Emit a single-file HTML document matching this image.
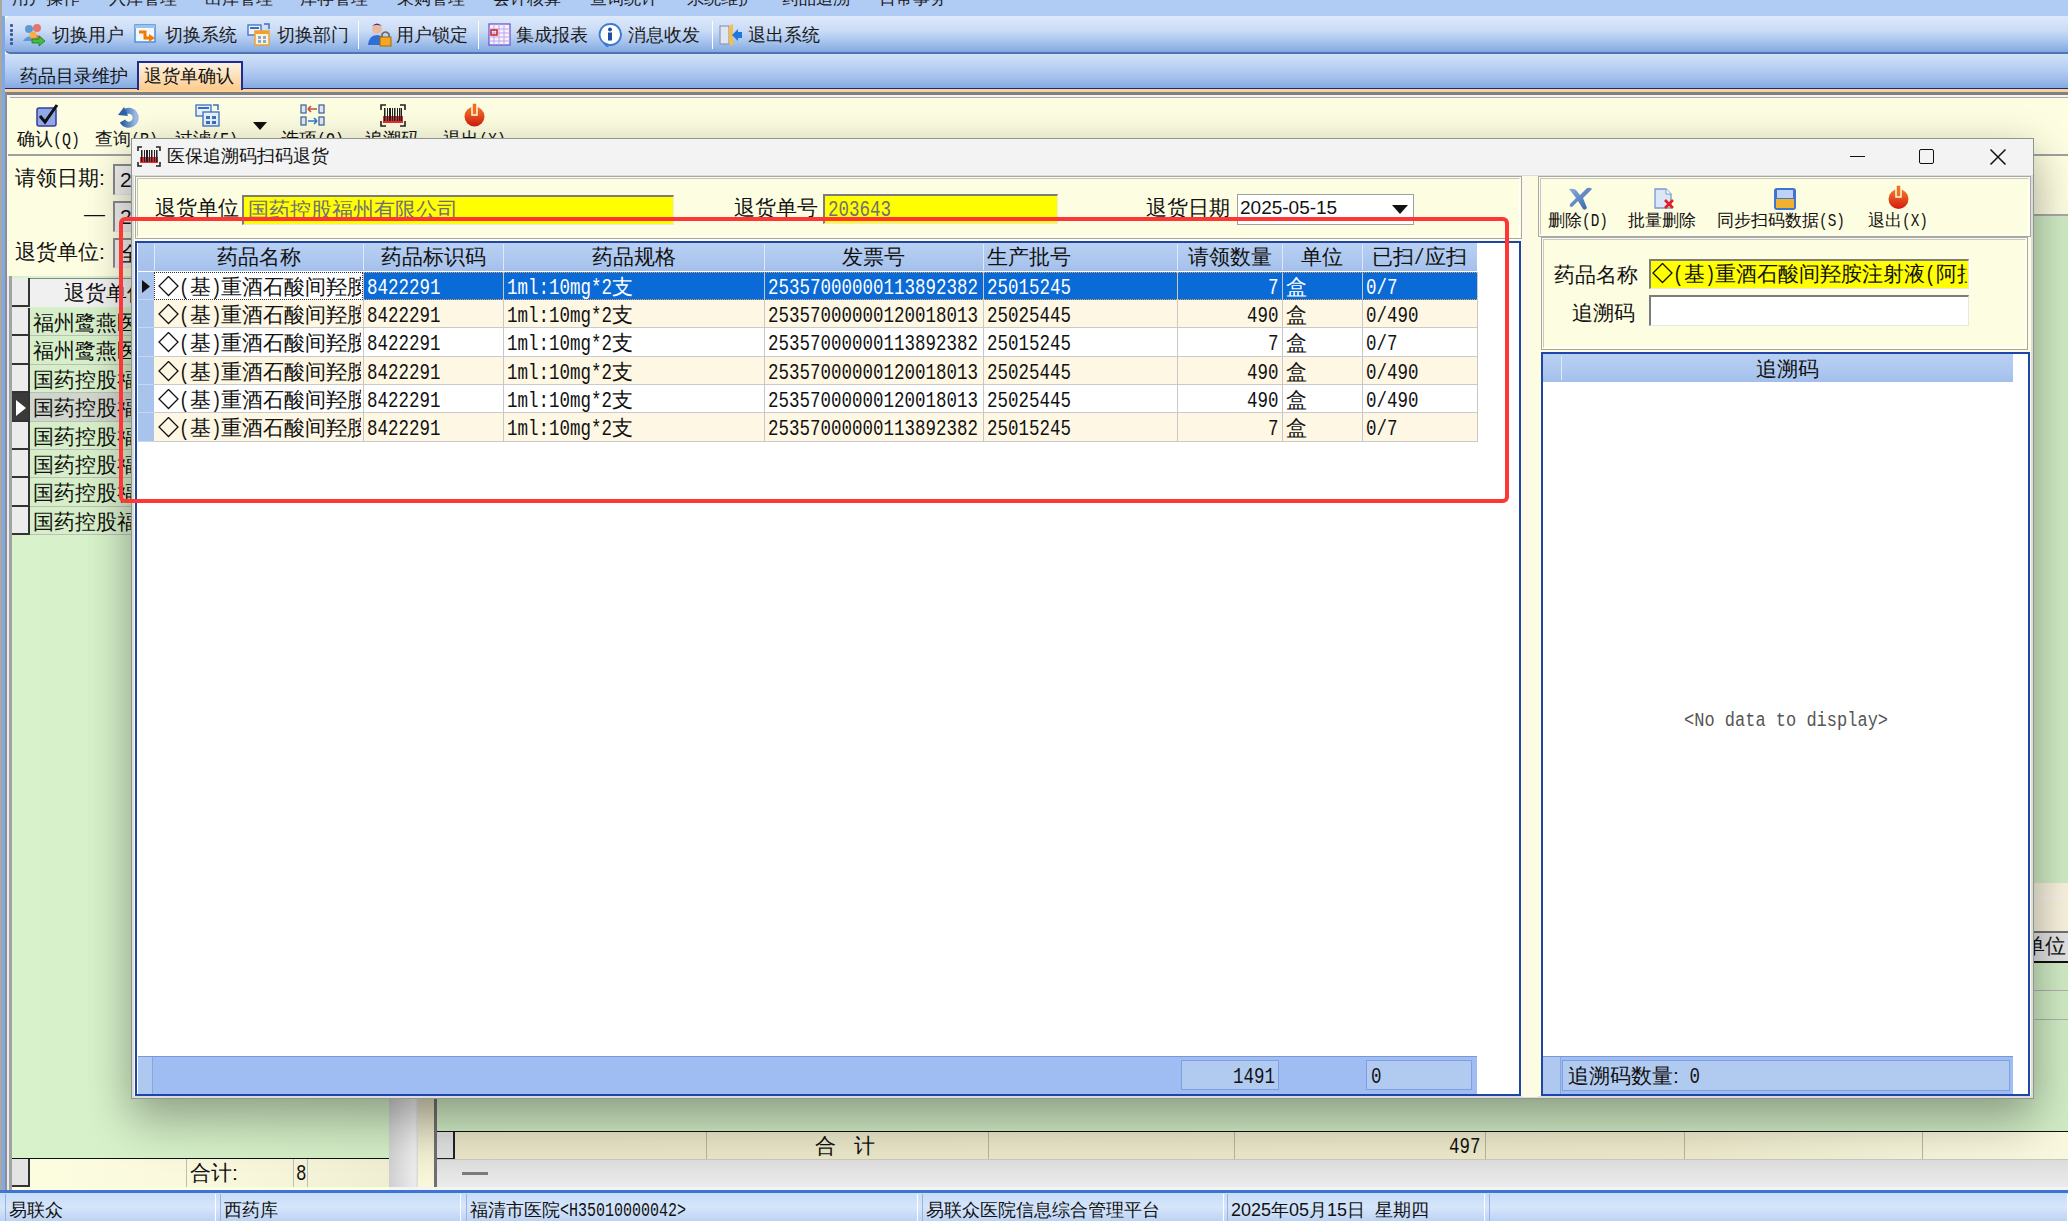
<!DOCTYPE html><html><head><meta charset="utf-8"><style>
*{margin:0;padding:0;box-sizing:border-box}
html,body{width:2068px;height:1221px;overflow:hidden;background:#fdfde1;font-family:"Liberation Sans",sans-serif;}
.m{font-family:"Liberation Mono",monospace;}
</style></head><body>
<div style="position:absolute;left:0px;top:0px;width:2px;height:1221px;background:#a8a8a0"></div>
<div style="position:absolute;left:2px;top:0px;width:3px;height:1221px;background:#80a8e8"></div>
<div style="position:absolute;left:2px;top:0px;width:2066px;height:16px;background:#b0cbf4"></div>
<div style="position:absolute;left:12px;top:-10px;font-size:17px;color:#1a1a1a;white-space:nowrap;line-height:17px;letter-spacing:0px">用户操作</div>
<div style="position:absolute;left:109px;top:-10px;font-size:17px;color:#1a1a1a;white-space:nowrap;line-height:17px;letter-spacing:0px">入库管理</div>
<div style="position:absolute;left:205px;top:-10px;font-size:17px;color:#1a1a1a;white-space:nowrap;line-height:17px;letter-spacing:0px">出库管理</div>
<div style="position:absolute;left:300px;top:-10px;font-size:17px;color:#1a1a1a;white-space:nowrap;line-height:17px;letter-spacing:0px">库存管理</div>
<div style="position:absolute;left:397px;top:-10px;font-size:17px;color:#1a1a1a;white-space:nowrap;line-height:17px;letter-spacing:0px">采购管理</div>
<div style="position:absolute;left:493px;top:-10px;font-size:17px;color:#1a1a1a;white-space:nowrap;line-height:17px;letter-spacing:0px">会计核算</div>
<div style="position:absolute;left:590px;top:-10px;font-size:17px;color:#1a1a1a;white-space:nowrap;line-height:17px;letter-spacing:0px">查询统计</div>
<div style="position:absolute;left:687px;top:-10px;font-size:17px;color:#1a1a1a;white-space:nowrap;line-height:17px;letter-spacing:0px">系统维护</div>
<div style="position:absolute;left:782px;top:-10px;font-size:17px;color:#1a1a1a;white-space:nowrap;line-height:17px;letter-spacing:0px">药品追溯</div>
<div style="position:absolute;left:879px;top:-10px;font-size:17px;color:#1a1a1a;white-space:nowrap;line-height:17px;letter-spacing:0px">日常事务</div>
<div style="position:absolute;left:5px;top:16px;width:2063px;height:38px;background:linear-gradient(#dde9fb,#cbdcf6 40%,#a9c5ee 70%,#82a9e0);border-bottom:2px solid #4f74b4;border-radius:5px 0 0 5px"></div>
<div style="position:absolute;left:10px;top:24.0px;width:3px;height:3px;background:#3a5a9a;border-radius:1px"></div>
<div style="position:absolute;left:10px;top:28.6px;width:3px;height:3px;background:#3a5a9a;border-radius:1px"></div>
<div style="position:absolute;left:10px;top:33.2px;width:3px;height:3px;background:#3a5a9a;border-radius:1px"></div>
<div style="position:absolute;left:10px;top:37.8px;width:3px;height:3px;background:#3a5a9a;border-radius:1px"></div>
<div style="position:absolute;left:10px;top:42.4px;width:3px;height:3px;background:#3a5a9a;border-radius:1px"></div>
<svg style="position:absolute;left:22px;top:23px" width="24" height="24" viewBox="0 0 24 24"><circle cx="7" cy="6" r="4" fill="#5b9bd5"/><path d="M1 18 Q7 9 13 18Z" fill="#5b9bd5"/><circle cx="15" cy="5" r="4" fill="#e8756a"/><path d="M9 16 Q15 8 21 16Z" fill="#e8756a"/><circle cx="11" cy="12" r="3.5" fill="#f5b041"/><path d="M10 16 H17 V13 L23 18 L17 23 V20 H10Z" fill="#3fbf3f" stroke="#1e7a1e" stroke-width="0.8"/></svg>
<div style="position:absolute;left:52px;top:26px;font-size:18px;color:#1a1a1a;white-space:nowrap;line-height:18px;">切换用户</div>
<svg style="position:absolute;left:134px;top:23px" width="24" height="24" viewBox="0 0 24 24"><rect x="1" y="2" width="20" height="17" fill="#f4f8fd" stroke="#4a90d9" stroke-width="1.5"/><rect x="1" y="2" width="20" height="3" fill="#9cc3ee"/><path d="M5 9 H11 V15 H16" stroke="#f07c00" stroke-width="3" fill="none"/><path d="M15 11 L21 15 L15 19Z" fill="#f07c00"/></svg>
<div style="position:absolute;left:165px;top:26px;font-size:18px;color:#1a1a1a;white-space:nowrap;line-height:18px;">切换系统</div>
<svg style="position:absolute;left:247px;top:23px" width="24" height="24" viewBox="0 0 24 24"><rect x="1" y="2" width="13" height="10" fill="#eaf2fb" stroke="#3a6fc0" stroke-width="1.3"/><rect x="3" y="4" width="9" height="2" fill="#3a6fc0"/><rect x="8" y="8" width="14" height="14" fill="#fff3d6" stroke="#f0a030" stroke-width="1.5"/><rect x="8" y="8" width="14" height="3" fill="#f0a030"/><g fill="#8aa8d8"><rect x="11" y="13" width="3" height="3"/><rect x="16" y="13" width="3" height="3"/><rect x="11" y="17" width="3" height="3"/><rect x="16" y="17" width="3" height="3"/></g><path d="M17 1 L22 1 L22 6" stroke="#3a6fc0" stroke-width="1.5" fill="none"/></svg>
<div style="position:absolute;left:277px;top:26px;font-size:18px;color:#1a1a1a;white-space:nowrap;line-height:18px;">切换部门</div>
<svg style="position:absolute;left:368px;top:23px" width="24" height="24" viewBox="0 0 24 24"><circle cx="9" cy="6" r="5" fill="#e9b9a0"/><path d="M4 3 Q9 -2 14 3 Q9 1 4 3Z" fill="#5a2d82"/><path d="M0 22 Q1 12 9 12 Q15 12 16 18 V22Z" fill="#2f6fd6"/><rect x="12" y="14" width="11" height="9" fill="#f5a623" stroke="#a86b00" stroke-width="1"/><path d="M14 14 V11 Q17.5 7 21 11 V14" stroke="#666" stroke-width="1.6" fill="none"/></svg>
<div style="position:absolute;left:396px;top:26px;font-size:18px;color:#1a1a1a;white-space:nowrap;line-height:18px;">用户锁定</div>
<svg style="position:absolute;left:488px;top:23px" width="24" height="24" viewBox="0 0 24 24"><rect x="1" y="1" width="21" height="21" fill="#f8f0ff" stroke="#6a5acd" stroke-width="1.3"/><g stroke="#b8a8e8" stroke-width="1"><path d="M1 6 H22 M1 10 H22 M1 14 H22 M1 18 H22 M6 1 V22 M11 1 V22 M16 1 V22"/></g><rect x="3" y="7" width="6" height="5" fill="none" stroke="#d02020" stroke-width="1.5"/></svg>
<div style="position:absolute;left:516px;top:26px;font-size:18px;color:#1a1a1a;white-space:nowrap;line-height:18px;">集成报表</div>
<svg style="position:absolute;left:598px;top:23px" width="24" height="24" viewBox="0 0 24 24"><path d="M12 1 A10.5 10.5 0 1 1 8 21 L10 24 L6 20 A10.5 10.5 0 0 1 12 1Z" fill="#fff" stroke="#3d7ad6" stroke-width="2"/><circle cx="12" cy="6.5" r="2" fill="#1f4fa0"/><rect x="10" y="9.5" width="4" height="8" fill="#1f4fa0"/></svg>
<div style="position:absolute;left:628px;top:26px;font-size:18px;color:#1a1a1a;white-space:nowrap;line-height:18px;">消息收发</div>
<svg style="position:absolute;left:718px;top:23px" width="24" height="24" viewBox="0 0 24 24"><rect x="2" y="3" width="9" height="18" fill="#dfe6f2" stroke="#8a9ab8" stroke-width="1.2"/><path d="M11 3 L15 1 V23 L11 21Z" fill="#f2c04a"/><path d="M14 12 L20 6 V9 H24 V15 H20 V18Z" fill="#1f78e0"/></svg>
<div style="position:absolute;left:748px;top:26px;font-size:18px;color:#1a1a1a;white-space:nowrap;line-height:18px;">退出系统</div>
<div style="position:absolute;left:358px;top:21px;width:1px;height:28px;background:#8aa8d8;border-right:1px solid #fff"></div>
<div style="position:absolute;left:478px;top:21px;width:1px;height:28px;background:#8aa8d8;border-right:1px solid #fff"></div>
<div style="position:absolute;left:712px;top:21px;width:1px;height:28px;background:#8aa8d8;border-right:1px solid #fff"></div>
<div style="position:absolute;left:5px;top:54px;width:2063px;height:35px;background:linear-gradient(#d0e1f8,#b8d0f2 40%,#9dbbea 75%,#80a8e0)"></div>
<div style="position:absolute;left:5px;top:88px;width:2063px;height:1px;background:#14288c"></div>
<div style="position:absolute;left:5px;top:89px;width:2063px;height:3px;background:#fdd292"></div>
<div style="position:absolute;left:20px;top:67px;font-size:18px;color:#111;white-space:nowrap;line-height:18px;">药品目录维护</div>
<div style="position:absolute;left:137px;top:61px;width:106px;height:29px;background:linear-gradient(#fdf2e2,#fde0b8 50%,#fcca8c);border:2px solid #1c2c94;border-bottom:none"></div>
<div style="position:absolute;left:144px;top:67px;font-size:18px;color:#111;white-space:nowrap;line-height:18px;">退货单确认</div>
<div style="position:absolute;left:5px;top:92px;width:2063px;height:1100px;background:#fdfde1;border-top:3px solid #808080"></div>
<div style="position:absolute;left:8px;top:95px;width:2060px;height:2px;background:#f4f4f4"></div>
<div style="position:absolute;left:10px;top:97px;width:2058px;height:1px;background:#aaaaaa"></div>
<div style="position:absolute;left:10px;top:98px;width:2058px;height:1px;background:#fff"></div>
<div style="position:absolute;left:10px;top:98px;width:2058px;height:56px;background:#fdfde1"></div>
<div style="position:absolute;left:8px;top:154px;width:2060px;height:2px;background:#a0a0a0"></div>
<div style="position:absolute;left:17px;top:130px;font-size:18px;color:#111;white-space:nowrap;line-height:18px;">确认<span class="m" style="display:inline-block;font-size:18px;line-height:1;transform:scaleX(0.83);transform-origin:0 0;margin-right:-5.51px">(Q)</span></div>
<div style="position:absolute;left:95px;top:130px;font-size:18px;color:#111;white-space:nowrap;line-height:18px;">查询<span class="m" style="display:inline-block;font-size:18px;line-height:1;transform:scaleX(0.83);transform-origin:0 0;margin-right:-5.51px">(R)</span></div>
<div style="position:absolute;left:175px;top:130px;font-size:18px;color:#111;white-space:nowrap;line-height:18px;">过滤<span class="m" style="display:inline-block;font-size:18px;line-height:1;transform:scaleX(0.83);transform-origin:0 0;margin-right:-5.51px">(F)</span></div>
<div style="position:absolute;left:281px;top:130px;font-size:18px;color:#111;white-space:nowrap;line-height:18px;">选项<span class="m" style="display:inline-block;font-size:18px;line-height:1;transform:scaleX(0.83);transform-origin:0 0;margin-right:-5.51px">(O)</span></div>
<div style="position:absolute;left:365px;top:130px;font-size:18px;color:#111;white-space:nowrap;line-height:18px;">追溯码</div>
<div style="position:absolute;left:443px;top:130px;font-size:18px;color:#111;white-space:nowrap;line-height:18px;">退出<span class="m" style="display:inline-block;font-size:18px;line-height:1;transform:scaleX(0.83);transform-origin:0 0;margin-right:-5.51px">(X)</span></div>
<svg style="position:absolute;left:36px;top:103px" width="26" height="24" viewBox="0 0 26 24"><rect x="1" y="5" width="19" height="18" rx="2" fill="#8fa8e8" stroke="#3a3aa0" stroke-width="1.5"/><path d="M4 13 L9 19 L21 2" stroke="#111" stroke-width="3" fill="none"/></svg>
<svg style="position:absolute;left:117px;top:104px" width="26" height="24" viewBox="0 0 26 24"><defs><linearGradient id="rg" x1="0" y1="0" x2="1" y2="0"><stop offset="0" stop-color="#2e62a8"/><stop offset="1" stop-color="#9dbbe8"/></linearGradient></defs><path d="M7 8.5 A7 7 0 1 1 5.5 17" stroke="url(#rg)" stroke-width="6" fill="none"/><path d="M1 11 L7 3 L11 12 Z" fill="#2e62a8"/></svg>
<svg style="position:absolute;left:195px;top:104px" width="26" height="24" viewBox="0 0 26 24"><rect x="1" y="1" width="15" height="11" fill="#eaf2fb" stroke="#3a6fc0" stroke-width="1.3"/><rect x="3" y="3" width="11" height="2" fill="#3a6fc0"/><rect x="8" y="8" width="16" height="14" fill="#e8f0fb" stroke="#3a6fc0" stroke-width="1.3"/><g fill="#3a6fc0"><rect x="11" y="12" width="4" height="3"/><rect x="17" y="12" width="4" height="3"/><rect x="11" y="17" width="4" height="3"/><rect x="17" y="17" width="4" height="3"/></g><path d="M18 1 L23 1 L23 6" stroke="#3a6fc0" stroke-width="1.5" fill="none"/></svg>
<svg style="position:absolute;left:300px;top:104px" width="26" height="24" viewBox="0 0 26 24"><g fill="#dfe8f4" stroke="#3a5f9a" stroke-width="1.2"><rect x="1" y="1" width="5" height="8"/><rect x="19" y="1" width="5" height="8"/><rect x="1" y="13" width="5" height="8"/><rect x="19" y="13" width="5" height="8"/></g><path d="M8 5 H17 M8 5 L11 2 M8 5 L11 8" stroke="#c0503a" stroke-width="1.6" fill="none"/><path d="M8 17 H17 M17 17 L14 14 M17 17 L14 20" stroke="#2f78d0" stroke-width="1.6" fill="none"/></svg>
<svg style="position:absolute;left:380px;top:104px" width="26" height="24" viewBox="0 0 26 24"><path d="M1 6 V1 H6 M20 1 H25 V6 M25 17 V22 H20 M6 22 H1 V17" stroke="#222" stroke-width="1.6" fill="none"/><rect x="3" y="12" width="20" height="7" fill="#e03030"/><g fill="#222"><rect x="4" y="4" width="1.5" height="13"/><rect x="7" y="4" width="1" height="13"/><rect x="9" y="4" width="2" height="13"/><rect x="12" y="4" width="1" height="13"/><rect x="14" y="4" width="1.5" height="13"/><rect x="17" y="4" width="1" height="13"/><rect x="19" y="4" width="1.5" height="13"/><rect x="21" y="4" width="1" height="13"/></g></svg>
<svg style="position:absolute;left:462px;top:103px" width="26" height="24" viewBox="0 0 26 24"><defs><linearGradient id="pg1" x1="0" y1="0" x2="0" y2="1"><stop offset="0" stop-color="#f47a2a"/><stop offset="1" stop-color="#d41a10"/></linearGradient></defs><circle cx="12.5" cy="13.5" r="10" fill="url(#pg1)"/><rect x="10" y="0" width="5" height="12" fill="#f07020" stroke="#fdfde1" stroke-width="1.5"/></svg>
<svg style="position:absolute;left:253px;top:122px" width="14" height="8"><path d="M0 0 H14 L7 8Z" fill="#111"/></svg>
<div style="position:absolute;left:8px;top:156px;width:2060px;height:58px;background:#fdfde1"></div>
<div style="position:absolute;left:8px;top:214px;width:2060px;height:2px;background:#a8a8a8"></div>
<div style="position:absolute;left:8px;top:216px;width:381px;height:943px;background:linear-gradient(90deg,#d8f3cb,#d2ecc5)"></div>
<div style="position:absolute;left:8px;top:156px;width:381px;height:120px;background:#fdfde1"></div>
<div style="position:absolute;left:15px;top:167px;font-size:21px;color:#111;white-space:nowrap;line-height:21px;">请领日期:</div>
<div style="position:absolute;left:84px;top:203px;font-size:21px;color:#111;white-space:nowrap;line-height:21px;">—</div>
<div style="position:absolute;left:15px;top:241px;font-size:21px;color:#111;white-space:nowrap;line-height:21px;">退货单位:</div>
<div style="position:absolute;left:113px;top:164px;width:30px;height:31px;background:#f0f0f0;border-top:2px solid #8a8a8a;border-left:2px solid #8a8a8a;border-bottom:1px solid #e8e8e8"></div>
<div style="position:absolute;left:120px;top:169px;font-size:21px;color:#111;white-space:nowrap;line-height:21px;">20</div>
<div style="position:absolute;left:113px;top:201px;width:30px;height:31px;background:#f0f0f0;border-top:2px solid #8a8a8a;border-left:2px solid #8a8a8a;border-bottom:1px solid #e8e8e8"></div>
<div style="position:absolute;left:120px;top:206px;font-size:21px;color:#111;white-space:nowrap;line-height:21px;">20</div>
<div style="position:absolute;left:113px;top:238px;width:30px;height:30px;background:#f0f0f0;border-top:2px solid #8a8a8a;border-left:2px solid #8a8a8a;border-bottom:1px solid #e8e8e8"></div>
<div style="position:absolute;left:120px;top:243px;font-size:21px;color:#111;white-space:nowrap;line-height:21px;">全</div>
<div style="position:absolute;left:12px;top:278px;width:130px;height:29px;background:#f0f0f0;border-top:1px solid #888"></div>
<div style="position:absolute;left:12px;top:278px;width:18px;height:29px;background:#ececec;border-right:2px solid #333;border-bottom:2px solid #333"></div>
<div style="position:absolute;left:64px;top:282px;font-size:21px;color:#111;white-space:nowrap;line-height:21px;">退货单位</div>
<div style="position:absolute;left:30px;top:308px;width:110px;height:28px;background:#d7efc9;border-bottom:1px solid #bdbdbd"></div>
<div style="position:absolute;left:12px;top:308px;width:18px;height:28px;background:#ececec;border-right:2px solid #333;border-bottom:2px solid #333"></div>
<div style="position:absolute;left:33px;top:312px;font-size:21px;color:#111;white-space:nowrap;line-height:21px;">福州鹭燕医</div>
<div style="position:absolute;left:30px;top:336px;width:110px;height:29px;background:#d7efc9;border-bottom:1px solid #bdbdbd"></div>
<div style="position:absolute;left:12px;top:336px;width:18px;height:29px;background:#ececec;border-right:2px solid #333;border-bottom:2px solid #333"></div>
<div style="position:absolute;left:33px;top:340px;font-size:21px;color:#111;white-space:nowrap;line-height:21px;">福州鹭燕医</div>
<div style="position:absolute;left:30px;top:365px;width:110px;height:28px;background:#d7efc9;border-bottom:1px solid #bdbdbd"></div>
<div style="position:absolute;left:12px;top:365px;width:18px;height:28px;background:#ececec;border-right:2px solid #333;border-bottom:2px solid #333"></div>
<div style="position:absolute;left:33px;top:369px;font-size:21px;color:#111;white-space:nowrap;line-height:21px;">国药控股福</div>
<div style="position:absolute;left:30px;top:393px;width:110px;height:29px;background:#d0d6cc;border-bottom:1px solid #bdbdbd"></div>
<div style="position:absolute;left:12px;top:393px;width:18px;height:29px;background:#3a3a3a;border-right:2px solid #333;border-bottom:2px solid #333"></div>
<svg style="position:absolute;left:15px;top:400px" width="12" height="16"><path d="M1 0 L11 8 L1 16 Z" fill="#fff"/></svg>
<div style="position:absolute;left:33px;top:397px;font-size:21px;color:#111;white-space:nowrap;line-height:21px;">国药控股福</div>
<div style="position:absolute;left:30px;top:422px;width:110px;height:28px;background:#d7efc9;border-bottom:1px solid #bdbdbd"></div>
<div style="position:absolute;left:12px;top:422px;width:18px;height:28px;background:#ececec;border-right:2px solid #333;border-bottom:2px solid #333"></div>
<div style="position:absolute;left:33px;top:426px;font-size:21px;color:#111;white-space:nowrap;line-height:21px;">国药控股福</div>
<div style="position:absolute;left:30px;top:450px;width:110px;height:28px;background:#d7efc9;border-bottom:1px solid #bdbdbd"></div>
<div style="position:absolute;left:12px;top:450px;width:18px;height:28px;background:#ececec;border-right:2px solid #333;border-bottom:2px solid #333"></div>
<div style="position:absolute;left:33px;top:454px;font-size:21px;color:#111;white-space:nowrap;line-height:21px;">国药控股福</div>
<div style="position:absolute;left:30px;top:478px;width:110px;height:29px;background:#d7efc9;border-bottom:1px solid #bdbdbd"></div>
<div style="position:absolute;left:12px;top:478px;width:18px;height:29px;background:#ececec;border-right:2px solid #333;border-bottom:2px solid #333"></div>
<div style="position:absolute;left:33px;top:482px;font-size:21px;color:#111;white-space:nowrap;line-height:21px;">国药控股福</div>
<div style="position:absolute;left:30px;top:507px;width:110px;height:28px;background:#d7efc9;border-bottom:1px solid #bdbdbd"></div>
<div style="position:absolute;left:12px;top:507px;width:18px;height:28px;background:#ececec;border-right:2px solid #333;border-bottom:2px solid #333"></div>
<div style="position:absolute;left:33px;top:511px;font-size:21px;color:#111;white-space:nowrap;line-height:21px;">国药控股福</div>
<div style="position:absolute;left:8px;top:1158px;width:381px;height:1px;background:#111"></div>
<div style="position:absolute;left:12px;top:1159px;width:377px;height:28px;background:linear-gradient(90deg,#fdfde0,#f8f7dc 60%,#f0eed2)"></div>
<div style="position:absolute;left:12px;top:1159px;width:18px;height:28px;background:#e4e4e4;border-right:2px solid #333;border-bottom:2px solid #333"></div>
<div style="position:absolute;left:186px;top:1159px;width:1px;height:28px;background:#c0c0b0"></div>
<div style="position:absolute;left:293px;top:1159px;width:1px;height:28px;background:#c0c0b0"></div>
<div style="position:absolute;left:307px;top:1159px;width:1px;height:28px;background:#c0c0b0"></div>
<div style="position:absolute;left:190px;top:1162px;font-size:21px;color:#111;white-space:nowrap;line-height:21px;">合计:</div>
<div style="position:absolute;left:296px;top:1162px;font-size:21px;color:#111;white-space:nowrap;line-height:21px;"><span class="m" style="display:inline-block;font-size:22px;line-height:1;transform:scaleX(0.795);transform-origin:0 0;margin-right:-2.71px">8</span></div>
<div style="position:absolute;left:389px;top:1098px;width:29px;height:92px;background:linear-gradient(90deg,#cfcfcf,#e2e2e2 60%,#ececec 90%,#d8d8d8)"></div>
<div style="position:absolute;left:418px;top:1098px;width:16px;height:92px;background:linear-gradient(#dcd8bc,#fbf9dc)"></div>
<div style="position:absolute;left:434px;top:1098px;width:3px;height:92px;background:#6f6f6f"></div>
<div style="position:absolute;left:437px;top:216px;width:1631px;height:916px;background:#d0ebc4"></div>
<div style="position:absolute;left:437px;top:1131px;width:1631px;height:1px;background:#111"></div>
<div style="position:absolute;left:437px;top:1132px;width:1631px;height:28px;background:linear-gradient(90deg,#e8e4c6,#ebe8ca 75%,#f9f8de)"></div>
<div style="position:absolute;left:437px;top:1132px;width:18px;height:28px;background:#dedede;border-right:2px solid #222;border-bottom:2px solid #222"></div>
<div style="position:absolute;left:706px;top:1132px;width:1px;height:28px;background:#b6b49c"></div>
<div style="position:absolute;left:988px;top:1132px;width:1px;height:28px;background:#b6b49c"></div>
<div style="position:absolute;left:1234px;top:1132px;width:1px;height:28px;background:#b6b49c"></div>
<div style="position:absolute;left:1485px;top:1132px;width:1px;height:28px;background:#b6b49c"></div>
<div style="position:absolute;left:1684px;top:1132px;width:1px;height:28px;background:#b6b49c"></div>
<div style="position:absolute;left:1922px;top:1132px;width:1px;height:28px;background:#b6b49c"></div>
<div style="position:absolute;left:437px;top:1159px;width:1631px;height:1px;background:#c8c8c0"></div>
<div style="position:absolute;left:815px;top:1135px;font-size:21px;color:#111;white-space:nowrap;line-height:21px;">合&nbsp;&nbsp;&nbsp;计</div>
<div style="position:absolute;left:1400px;top:1135px;font-size:21px;color:#111;white-space:nowrap;line-height:21px;width:80px;overflow:hidden;text-align:right;"><span class="m" style="display:inline-block;font-size:22px;line-height:1;transform:scaleX(0.795);transform-origin:0 0;margin-right:-8.12px">497</span></div>
<div style="position:absolute;left:437px;top:1160px;width:1631px;height:28px;background:linear-gradient(#dcdcdc,#ececec)"></div>
<div style="position:absolute;left:462px;top:1172px;width:26px;height:3px;background:#7a7a7a"></div>
<div style="position:absolute;left:389px;top:1187px;width:1679px;height:3px;background:#f4f4f4"></div>
<div style="position:absolute;left:2034px;top:883px;width:34px;height:48px;background:#f7f1dd"></div>
<div style="position:absolute;left:2034px;top:897px;width:34px;height:1px;background:#f4f4f4"></div>
<div style="position:absolute;left:2034px;top:931px;width:34px;height:2px;background:#707070"></div>
<div style="position:absolute;left:2034px;top:933px;width:34px;height:28px;background:#e2e2e2"></div>
<div style="position:absolute;left:2024px;top:935px;font-size:21px;color:#111;white-space:nowrap;line-height:21px;">单位</div>
<div style="position:absolute;left:2034px;top:961px;width:34px;height:2px;background:#111"></div>
<div style="position:absolute;left:2034px;top:990px;width:34px;height:1px;background:#b0b0b0"></div>
<div style="position:absolute;left:2034px;top:1019px;width:34px;height:1px;background:#b0b0b0"></div>
<div style="position:absolute;left:5px;top:93px;width:2px;height:1100px;background:#8e8e8e"></div>
<div style="position:absolute;left:7px;top:276px;width:2px;height:914px;background:#ececec"></div>
<div style="position:absolute;left:9px;top:276px;width:3px;height:914px;background:#a2a2a2"></div>
<div style="position:absolute;left:0px;top:1190px;width:2068px;height:31px;background:linear-gradient(#c6dcf8,#d6e6fb 50%,#bcd3f5);border-top:3px solid #3f74d0"></div>
<div style="position:absolute;left:5px;top:1194px;width:211px;height:27px;border-left:1px solid #9ab4dc;border-right:1px solid #fff"></div>
<div style="position:absolute;left:9px;top:1201px;font-size:18px;color:#111;white-space:nowrap;line-height:18px;">易联众</div>
<div style="position:absolute;left:220px;top:1194px;width:241px;height:27px;border-left:1px solid #9ab4dc;border-right:1px solid #fff"></div>
<div style="position:absolute;left:224px;top:1201px;font-size:18px;color:#111;white-space:nowrap;line-height:18px;">西药库</div>
<div style="position:absolute;left:466px;top:1194px;width:452px;height:27px;border-left:1px solid #9ab4dc;border-right:1px solid #fff"></div>
<div style="position:absolute;left:470px;top:1201px;font-size:18px;color:#111;white-space:nowrap;line-height:18px;">福清市医院<span class="m" style="display:inline-block;font-size:20px;line-height:1;transform:scaleX(0.75);transform-origin:0 0;margin-right:-42.00px">&lt;H35010000042&gt;</span></div>
<div style="position:absolute;left:922px;top:1194px;width:302px;height:27px;border-left:1px solid #9ab4dc;border-right:1px solid #fff"></div>
<div style="position:absolute;left:926px;top:1201px;font-size:18px;color:#111;white-space:nowrap;line-height:18px;">易联众医院信息综合管理平台</div>
<div style="position:absolute;left:1227px;top:1194px;width:258px;height:27px;border-left:1px solid #9ab4dc;border-right:1px solid #fff"></div>
<div style="position:absolute;left:1231px;top:1201px;font-size:18px;color:#111;white-space:nowrap;line-height:18px;">2025年05月15日&nbsp;&nbsp;星期四</div>
<div style="position:absolute;left:1489px;top:1194px;width:579px;height:27px;border-left:1px solid #9ab4dc;border-right:1px solid #fff"></div>
<div style="position:absolute;left:1493px;top:1201px;font-size:18px;color:#111;white-space:nowrap;line-height:18px;"></div>
<div style="position:absolute;left:131px;top:138px;width:1903px;height:961px;background:#dcdcdc;border:1px solid #8f978a;box-shadow:0 10px 40px rgba(0,0,0,0.22),0 28px 44px rgba(0,0,0,0.16)"></div>
<div style="position:absolute;left:134px;top:176px;width:1897px;height:920px;background:#fdfde1"></div>
<div style="position:absolute;left:132px;top:139px;width:1901px;height:37px;background:#f3f3f3"></div>
<svg style="position:absolute;left:137px;top:146px" width="24" height="21" viewBox="0 0 24 21"><path d="M1 5 V1 H5 M19 1 H23 V5 M23 16 V20 H19 M5 20 H1 V16" stroke="#222" stroke-width="1.6" fill="none"/><rect x="3" y="11" width="18" height="6" fill="#e03030"/><g fill="#222"><rect x="4" y="4" width="1.5" height="12"/><rect x="7" y="4" width="1" height="12"/><rect x="9" y="4" width="2" height="12"/><rect x="12" y="4" width="1" height="12"/><rect x="14" y="4" width="1.5" height="12"/><rect x="17" y="4" width="1" height="12"/><rect x="19" y="4" width="1.5" height="12"/></g></svg>
<div style="position:absolute;left:167px;top:147px;font-size:18px;color:#111;white-space:nowrap;line-height:18px;">医保追溯码扫码退货</div>
<div style="position:absolute;left:1850px;top:156px;width:15px;height:1px;background:#111"></div>
<div style="position:absolute;left:1919px;top:149px;width:15px;height:15px;border:1.5px solid #111;border-radius:2px"></div>
<svg style="position:absolute;left:1989px;top:148px" width="18" height="18"><path d="M1.5 1.5 L16.5 16.5 M16.5 1.5 L1.5 16.5" stroke="#111" stroke-width="1.5"/></svg>
<div style="position:absolute;left:132px;top:175px;width:1901px;height:1px;background:#dcdcdc"></div>
<div style="position:absolute;left:135px;top:176px;width:1387px;height:63px;border:1px solid #a8a8a8;background:#fdfde1"></div>
<div style="position:absolute;left:137px;top:178px;width:1383px;height:59px;border:1px solid #c4c4c4;border-right-color:#fff;border-bottom-color:#fff"></div>
<div style="position:absolute;left:155px;top:197px;font-size:21px;color:#111;white-space:nowrap;line-height:21px;">退货单位</div>
<div style="position:absolute;left:242px;top:195px;width:432px;height:30px;background:#ffff00;border-top:2px solid #7c7c7c;border-left:2px solid #7c7c7c;border-right:1px solid #e8e8e8;border-bottom:1px solid #e8e8e8"></div>
<div style="position:absolute;left:248px;top:199px;font-size:21px;color:#6f6f78;white-space:nowrap;line-height:21px;">国药控股福州有限公司</div>
<div style="position:absolute;left:734px;top:197px;font-size:21px;color:#111;white-space:nowrap;line-height:21px;">退货单号</div>
<div style="position:absolute;left:823px;top:194px;width:235px;height:30px;background:#ffff00;border-top:2px solid #7c7c7c;border-left:2px solid #7c7c7c;border-right:1px solid #e8e8e8;border-bottom:1px solid #e8e8e8"></div>
<div style="position:absolute;left:828px;top:198px;font-size:21px;color:#6f6f78;white-space:nowrap;line-height:21px;"><span class="m" style="display:inline-block;font-size:22px;line-height:1;transform:scaleX(0.795);transform-origin:0 0;margin-right:-16.24px">203643</span></div>
<div style="position:absolute;left:1146px;top:197px;font-size:21px;color:#111;white-space:nowrap;line-height:21px;">退货日期</div>
<div style="position:absolute;left:1237px;top:194px;width:177px;height:31px;background:#fff;border:1px solid #a0a0a0"></div>
<div style="position:absolute;left:1240px;top:198px;font-size:19px;color:#111;white-space:nowrap;line-height:19px;font-family:'Liberation Sans'">2025-05-15</div>
<svg style="position:absolute;left:1392px;top:205px" width="16" height="9"><path d="M0 0 H16 L8 9 Z" fill="#111"/></svg>
<div style="position:absolute;left:1522px;top:176px;width:16px;height:921px;background:linear-gradient(90deg,#fdf9e8,#fdfde1)"></div>
<div style="position:absolute;left:135px;top:241px;width:1386px;height:855px;background:#fff;border:2px solid #1f45a8"></div>
<div style="position:absolute;left:138px;top:243px;width:1339px;height:28px;background:linear-gradient(#b8d0f3,#abc6ee 70%,#a2bfec)"></div>
<div style="position:absolute;left:138px;top:243px;width:16px;height:28px;background:linear-gradient(#b0c9ef,#a4c0ec)"></div>
<div style="position:absolute;left:154px;top:244px;width:1px;height:26px;background:#dfe9f8"></div>
<div style="position:absolute;left:154px;top:246px;width:209px;text-align:center;font-size:21px;line-height:21px;color:#111;white-space:nowrap">药品名称</div>
<div style="position:absolute;left:363px;top:244px;width:1px;height:26px;background:#dfe9f8"></div>
<div style="position:absolute;left:363px;top:246px;width:140px;text-align:center;font-size:21px;line-height:21px;color:#111;white-space:nowrap">药品标识码</div>
<div style="position:absolute;left:503px;top:244px;width:1px;height:26px;background:#dfe9f8"></div>
<div style="position:absolute;left:503px;top:246px;width:261px;text-align:center;font-size:21px;line-height:21px;color:#111;white-space:nowrap">药品规格</div>
<div style="position:absolute;left:764px;top:244px;width:1px;height:26px;background:#dfe9f8"></div>
<div style="position:absolute;left:764px;top:246px;width:219px;text-align:center;font-size:21px;line-height:21px;color:#111;white-space:nowrap">发票号</div>
<div style="position:absolute;left:983px;top:244px;width:1px;height:26px;background:#dfe9f8"></div>
<div style="position:absolute;left:987px;top:246px;width:194px;text-align:left;font-size:21px;line-height:21px;color:#111;white-space:nowrap">生产批号</div>
<div style="position:absolute;left:1177px;top:244px;width:1px;height:26px;background:#dfe9f8"></div>
<div style="position:absolute;left:1177px;top:246px;width:105px;text-align:center;font-size:21px;line-height:21px;color:#111;white-space:nowrap">请领数量</div>
<div style="position:absolute;left:1282px;top:244px;width:1px;height:26px;background:#dfe9f8"></div>
<div style="position:absolute;left:1282px;top:246px;width:80px;text-align:center;font-size:21px;line-height:21px;color:#111;white-space:nowrap">单位</div>
<div style="position:absolute;left:1362px;top:244px;width:1px;height:26px;background:#dfe9f8"></div>
<div style="position:absolute;left:1362px;top:246px;width:115px;text-align:center;font-size:21px;line-height:21px;color:#111;white-space:nowrap">已扫<span class="m" style="display:inline-block;font-size:22px;line-height:1;transform:scaleX(0.795);transform-origin:0 0;margin-right:-2.71px">/</span>应扫</div>
<div style="position:absolute;left:1477px;top:243px;width:42px;height:28px;background:#fff"></div>
<div style="position:absolute;left:138px;top:272px;width:16px;height:28px;background:#a8c3ec;border-bottom:1px solid #c7d7f2"></div>
<div style="position:absolute;left:154px;top:272px;width:1323px;height:28px;background:#ffffff;border-bottom:1px solid #cacaca"></div>
<div style="position:absolute;left:363px;top:272px;width:1114px;height:28px;background:#0a6ad6;border-top:1px dotted #e0a060;border-bottom:1px dotted #e0a060"></div>
<div style="position:absolute;left:154px;top:272px;width:209px;height:28px;background:#fff;border:1px dotted #333"></div>
<svg style="position:absolute;left:142px;top:280px" width="8" height="13"><path d="M0 0 L8 6.5 L0 13 Z" fill="#111"/></svg>
<div style="position:absolute;left:363px;top:272px;width:1px;height:28px;background:#c8c8c8"></div>
<div style="position:absolute;left:503px;top:272px;width:1px;height:28px;background:#c8c8c8"></div>
<div style="position:absolute;left:764px;top:272px;width:1px;height:28px;background:#c8c8c8"></div>
<div style="position:absolute;left:983px;top:272px;width:1px;height:28px;background:#c8c8c8"></div>
<div style="position:absolute;left:1177px;top:272px;width:1px;height:28px;background:#c8c8c8"></div>
<div style="position:absolute;left:1282px;top:272px;width:1px;height:28px;background:#c8c8c8"></div>
<div style="position:absolute;left:1362px;top:272px;width:1px;height:28px;background:#c8c8c8"></div>
<div style="position:absolute;left:1477px;top:272px;width:1px;height:28px;background:#c8c8c8"></div>
<div style="position:absolute;left:158px;top:276px;width:203px;font-size:21px;line-height:21px;color:#111;white-space:nowrap;overflow:hidden"><span style="display:inline-block;width:21px;height:21px;vertical-align:top;position:relative"><svg style="position:absolute;left:0;top:-1px" width="21" height="22"><path d="M10.5 1.5 L20 11 L10.5 20.5 L1 11Z" fill="none" stroke="currentColor" stroke-width="1.3"/></svg></span><span class="m" style="display:inline-block;font-size:22px;line-height:1;transform:scaleX(0.795);transform-origin:0 0;margin-right:-2.71px">(</span>基<span class="m" style="display:inline-block;font-size:22px;line-height:1;transform:scaleX(0.795);transform-origin:0 0;margin-right:-2.71px">)</span>重酒石酸间羟胺</div>
<div style="position:absolute;left:367px;top:276px;width:134px;font-size:21px;line-height:21px;color:#fff;white-space:nowrap;overflow:hidden"><span class="m" style="display:inline-block;font-size:22px;line-height:1;transform:scaleX(0.795);transform-origin:0 0;margin-right:-18.94px">8422291</span></div>
<div style="position:absolute;left:507px;top:276px;width:255px;font-size:21px;line-height:21px;color:#fff;white-space:nowrap;overflow:hidden"><span class="m" style="display:inline-block;font-size:22px;line-height:1;transform:scaleX(0.795);transform-origin:0 0;margin-right:-27.06px">1ml:10mg*2</span>支</div>
<div style="position:absolute;left:768px;top:276px;width:213px;font-size:21px;line-height:21px;color:#fff;white-space:nowrap;overflow:hidden"><span class="m" style="display:inline-block;font-size:22px;line-height:1;transform:scaleX(0.795);transform-origin:0 0;margin-right:-54.12px">25357000000113892382</span></div>
<div style="position:absolute;left:987px;top:276px;width:188px;font-size:21px;line-height:21px;color:#fff;white-space:nowrap;overflow:hidden"><span class="m" style="display:inline-block;font-size:22px;line-height:1;transform:scaleX(0.795);transform-origin:0 0;margin-right:-21.65px">25015245</span></div>
<div style="position:absolute;left:1177px;top:276px;width:101px;text-align:right;font-size:21px;line-height:21px;color:#fff;white-space:nowrap;overflow:hidden"><span class="m" style="display:inline-block;font-size:22px;line-height:1;transform:scaleX(0.795);transform-origin:0 0;margin-right:-2.71px">7</span></div>
<div style="position:absolute;left:1286px;top:276px;width:74px;font-size:21px;line-height:21px;color:#fff;white-space:nowrap;overflow:hidden">盒</div>
<div style="position:absolute;left:1366px;top:276px;width:109px;font-size:21px;line-height:21px;color:#fff;white-space:nowrap;overflow:hidden"><span class="m" style="display:inline-block;font-size:22px;line-height:1;transform:scaleX(0.795);transform-origin:0 0;margin-right:-8.12px">0/7</span></div>
<div style="position:absolute;left:138px;top:300px;width:16px;height:28px;background:#a8c3ec;border-bottom:1px solid #c7d7f2"></div>
<div style="position:absolute;left:154px;top:300px;width:1323px;height:28px;background:#fdf7e3;border-bottom:1px solid #cacaca"></div>
<div style="position:absolute;left:363px;top:300px;width:1px;height:28px;background:#c8c8c8"></div>
<div style="position:absolute;left:503px;top:300px;width:1px;height:28px;background:#c8c8c8"></div>
<div style="position:absolute;left:764px;top:300px;width:1px;height:28px;background:#c8c8c8"></div>
<div style="position:absolute;left:983px;top:300px;width:1px;height:28px;background:#c8c8c8"></div>
<div style="position:absolute;left:1177px;top:300px;width:1px;height:28px;background:#c8c8c8"></div>
<div style="position:absolute;left:1282px;top:300px;width:1px;height:28px;background:#c8c8c8"></div>
<div style="position:absolute;left:1362px;top:300px;width:1px;height:28px;background:#c8c8c8"></div>
<div style="position:absolute;left:1477px;top:300px;width:1px;height:28px;background:#c8c8c8"></div>
<div style="position:absolute;left:158px;top:304px;width:203px;font-size:21px;line-height:21px;color:#111;white-space:nowrap;overflow:hidden"><span style="display:inline-block;width:21px;height:21px;vertical-align:top;position:relative"><svg style="position:absolute;left:0;top:-1px" width="21" height="22"><path d="M10.5 1.5 L20 11 L10.5 20.5 L1 11Z" fill="none" stroke="currentColor" stroke-width="1.3"/></svg></span><span class="m" style="display:inline-block;font-size:22px;line-height:1;transform:scaleX(0.795);transform-origin:0 0;margin-right:-2.71px">(</span>基<span class="m" style="display:inline-block;font-size:22px;line-height:1;transform:scaleX(0.795);transform-origin:0 0;margin-right:-2.71px">)</span>重酒石酸间羟胺</div>
<div style="position:absolute;left:367px;top:304px;width:134px;font-size:21px;line-height:21px;color:#111;white-space:nowrap;overflow:hidden"><span class="m" style="display:inline-block;font-size:22px;line-height:1;transform:scaleX(0.795);transform-origin:0 0;margin-right:-18.94px">8422291</span></div>
<div style="position:absolute;left:507px;top:304px;width:255px;font-size:21px;line-height:21px;color:#111;white-space:nowrap;overflow:hidden"><span class="m" style="display:inline-block;font-size:22px;line-height:1;transform:scaleX(0.795);transform-origin:0 0;margin-right:-27.06px">1ml:10mg*2</span>支</div>
<div style="position:absolute;left:768px;top:304px;width:213px;font-size:21px;line-height:21px;color:#111;white-space:nowrap;overflow:hidden"><span class="m" style="display:inline-block;font-size:22px;line-height:1;transform:scaleX(0.795);transform-origin:0 0;margin-right:-54.12px">25357000000120018013</span></div>
<div style="position:absolute;left:987px;top:304px;width:188px;font-size:21px;line-height:21px;color:#111;white-space:nowrap;overflow:hidden"><span class="m" style="display:inline-block;font-size:22px;line-height:1;transform:scaleX(0.795);transform-origin:0 0;margin-right:-21.65px">25025445</span></div>
<div style="position:absolute;left:1177px;top:304px;width:101px;text-align:right;font-size:21px;line-height:21px;color:#111;white-space:nowrap;overflow:hidden"><span class="m" style="display:inline-block;font-size:22px;line-height:1;transform:scaleX(0.795);transform-origin:0 0;margin-right:-8.12px">490</span></div>
<div style="position:absolute;left:1286px;top:304px;width:74px;font-size:21px;line-height:21px;color:#111;white-space:nowrap;overflow:hidden">盒</div>
<div style="position:absolute;left:1366px;top:304px;width:109px;font-size:21px;line-height:21px;color:#111;white-space:nowrap;overflow:hidden"><span class="m" style="display:inline-block;font-size:22px;line-height:1;transform:scaleX(0.795);transform-origin:0 0;margin-right:-13.53px">0/490</span></div>
<div style="position:absolute;left:138px;top:328px;width:16px;height:29px;background:#a8c3ec;border-bottom:1px solid #c7d7f2"></div>
<div style="position:absolute;left:154px;top:328px;width:1323px;height:29px;background:#ffffff;border-bottom:1px solid #cacaca"></div>
<div style="position:absolute;left:363px;top:328px;width:1px;height:29px;background:#c8c8c8"></div>
<div style="position:absolute;left:503px;top:328px;width:1px;height:29px;background:#c8c8c8"></div>
<div style="position:absolute;left:764px;top:328px;width:1px;height:29px;background:#c8c8c8"></div>
<div style="position:absolute;left:983px;top:328px;width:1px;height:29px;background:#c8c8c8"></div>
<div style="position:absolute;left:1177px;top:328px;width:1px;height:29px;background:#c8c8c8"></div>
<div style="position:absolute;left:1282px;top:328px;width:1px;height:29px;background:#c8c8c8"></div>
<div style="position:absolute;left:1362px;top:328px;width:1px;height:29px;background:#c8c8c8"></div>
<div style="position:absolute;left:1477px;top:328px;width:1px;height:29px;background:#c8c8c8"></div>
<div style="position:absolute;left:158px;top:332px;width:203px;font-size:21px;line-height:21px;color:#111;white-space:nowrap;overflow:hidden"><span style="display:inline-block;width:21px;height:21px;vertical-align:top;position:relative"><svg style="position:absolute;left:0;top:-1px" width="21" height="22"><path d="M10.5 1.5 L20 11 L10.5 20.5 L1 11Z" fill="none" stroke="currentColor" stroke-width="1.3"/></svg></span><span class="m" style="display:inline-block;font-size:22px;line-height:1;transform:scaleX(0.795);transform-origin:0 0;margin-right:-2.71px">(</span>基<span class="m" style="display:inline-block;font-size:22px;line-height:1;transform:scaleX(0.795);transform-origin:0 0;margin-right:-2.71px">)</span>重酒石酸间羟胺</div>
<div style="position:absolute;left:367px;top:332px;width:134px;font-size:21px;line-height:21px;color:#111;white-space:nowrap;overflow:hidden"><span class="m" style="display:inline-block;font-size:22px;line-height:1;transform:scaleX(0.795);transform-origin:0 0;margin-right:-18.94px">8422291</span></div>
<div style="position:absolute;left:507px;top:332px;width:255px;font-size:21px;line-height:21px;color:#111;white-space:nowrap;overflow:hidden"><span class="m" style="display:inline-block;font-size:22px;line-height:1;transform:scaleX(0.795);transform-origin:0 0;margin-right:-27.06px">1ml:10mg*2</span>支</div>
<div style="position:absolute;left:768px;top:332px;width:213px;font-size:21px;line-height:21px;color:#111;white-space:nowrap;overflow:hidden"><span class="m" style="display:inline-block;font-size:22px;line-height:1;transform:scaleX(0.795);transform-origin:0 0;margin-right:-54.12px">25357000000113892382</span></div>
<div style="position:absolute;left:987px;top:332px;width:188px;font-size:21px;line-height:21px;color:#111;white-space:nowrap;overflow:hidden"><span class="m" style="display:inline-block;font-size:22px;line-height:1;transform:scaleX(0.795);transform-origin:0 0;margin-right:-21.65px">25015245</span></div>
<div style="position:absolute;left:1177px;top:332px;width:101px;text-align:right;font-size:21px;line-height:21px;color:#111;white-space:nowrap;overflow:hidden"><span class="m" style="display:inline-block;font-size:22px;line-height:1;transform:scaleX(0.795);transform-origin:0 0;margin-right:-2.71px">7</span></div>
<div style="position:absolute;left:1286px;top:332px;width:74px;font-size:21px;line-height:21px;color:#111;white-space:nowrap;overflow:hidden">盒</div>
<div style="position:absolute;left:1366px;top:332px;width:109px;font-size:21px;line-height:21px;color:#111;white-space:nowrap;overflow:hidden"><span class="m" style="display:inline-block;font-size:22px;line-height:1;transform:scaleX(0.795);transform-origin:0 0;margin-right:-8.12px">0/7</span></div>
<div style="position:absolute;left:138px;top:357px;width:16px;height:28px;background:#a8c3ec;border-bottom:1px solid #c7d7f2"></div>
<div style="position:absolute;left:154px;top:357px;width:1323px;height:28px;background:#fdf7e3;border-bottom:1px solid #cacaca"></div>
<div style="position:absolute;left:363px;top:357px;width:1px;height:28px;background:#c8c8c8"></div>
<div style="position:absolute;left:503px;top:357px;width:1px;height:28px;background:#c8c8c8"></div>
<div style="position:absolute;left:764px;top:357px;width:1px;height:28px;background:#c8c8c8"></div>
<div style="position:absolute;left:983px;top:357px;width:1px;height:28px;background:#c8c8c8"></div>
<div style="position:absolute;left:1177px;top:357px;width:1px;height:28px;background:#c8c8c8"></div>
<div style="position:absolute;left:1282px;top:357px;width:1px;height:28px;background:#c8c8c8"></div>
<div style="position:absolute;left:1362px;top:357px;width:1px;height:28px;background:#c8c8c8"></div>
<div style="position:absolute;left:1477px;top:357px;width:1px;height:28px;background:#c8c8c8"></div>
<div style="position:absolute;left:158px;top:361px;width:203px;font-size:21px;line-height:21px;color:#111;white-space:nowrap;overflow:hidden"><span style="display:inline-block;width:21px;height:21px;vertical-align:top;position:relative"><svg style="position:absolute;left:0;top:-1px" width="21" height="22"><path d="M10.5 1.5 L20 11 L10.5 20.5 L1 11Z" fill="none" stroke="currentColor" stroke-width="1.3"/></svg></span><span class="m" style="display:inline-block;font-size:22px;line-height:1;transform:scaleX(0.795);transform-origin:0 0;margin-right:-2.71px">(</span>基<span class="m" style="display:inline-block;font-size:22px;line-height:1;transform:scaleX(0.795);transform-origin:0 0;margin-right:-2.71px">)</span>重酒石酸间羟胺</div>
<div style="position:absolute;left:367px;top:361px;width:134px;font-size:21px;line-height:21px;color:#111;white-space:nowrap;overflow:hidden"><span class="m" style="display:inline-block;font-size:22px;line-height:1;transform:scaleX(0.795);transform-origin:0 0;margin-right:-18.94px">8422291</span></div>
<div style="position:absolute;left:507px;top:361px;width:255px;font-size:21px;line-height:21px;color:#111;white-space:nowrap;overflow:hidden"><span class="m" style="display:inline-block;font-size:22px;line-height:1;transform:scaleX(0.795);transform-origin:0 0;margin-right:-27.06px">1ml:10mg*2</span>支</div>
<div style="position:absolute;left:768px;top:361px;width:213px;font-size:21px;line-height:21px;color:#111;white-space:nowrap;overflow:hidden"><span class="m" style="display:inline-block;font-size:22px;line-height:1;transform:scaleX(0.795);transform-origin:0 0;margin-right:-54.12px">25357000000120018013</span></div>
<div style="position:absolute;left:987px;top:361px;width:188px;font-size:21px;line-height:21px;color:#111;white-space:nowrap;overflow:hidden"><span class="m" style="display:inline-block;font-size:22px;line-height:1;transform:scaleX(0.795);transform-origin:0 0;margin-right:-21.65px">25025445</span></div>
<div style="position:absolute;left:1177px;top:361px;width:101px;text-align:right;font-size:21px;line-height:21px;color:#111;white-space:nowrap;overflow:hidden"><span class="m" style="display:inline-block;font-size:22px;line-height:1;transform:scaleX(0.795);transform-origin:0 0;margin-right:-8.12px">490</span></div>
<div style="position:absolute;left:1286px;top:361px;width:74px;font-size:21px;line-height:21px;color:#111;white-space:nowrap;overflow:hidden">盒</div>
<div style="position:absolute;left:1366px;top:361px;width:109px;font-size:21px;line-height:21px;color:#111;white-space:nowrap;overflow:hidden"><span class="m" style="display:inline-block;font-size:22px;line-height:1;transform:scaleX(0.795);transform-origin:0 0;margin-right:-13.53px">0/490</span></div>
<div style="position:absolute;left:138px;top:385px;width:16px;height:28px;background:#a8c3ec;border-bottom:1px solid #c7d7f2"></div>
<div style="position:absolute;left:154px;top:385px;width:1323px;height:28px;background:#ffffff;border-bottom:1px solid #cacaca"></div>
<div style="position:absolute;left:363px;top:385px;width:1px;height:28px;background:#c8c8c8"></div>
<div style="position:absolute;left:503px;top:385px;width:1px;height:28px;background:#c8c8c8"></div>
<div style="position:absolute;left:764px;top:385px;width:1px;height:28px;background:#c8c8c8"></div>
<div style="position:absolute;left:983px;top:385px;width:1px;height:28px;background:#c8c8c8"></div>
<div style="position:absolute;left:1177px;top:385px;width:1px;height:28px;background:#c8c8c8"></div>
<div style="position:absolute;left:1282px;top:385px;width:1px;height:28px;background:#c8c8c8"></div>
<div style="position:absolute;left:1362px;top:385px;width:1px;height:28px;background:#c8c8c8"></div>
<div style="position:absolute;left:1477px;top:385px;width:1px;height:28px;background:#c8c8c8"></div>
<div style="position:absolute;left:158px;top:389px;width:203px;font-size:21px;line-height:21px;color:#111;white-space:nowrap;overflow:hidden"><span style="display:inline-block;width:21px;height:21px;vertical-align:top;position:relative"><svg style="position:absolute;left:0;top:-1px" width="21" height="22"><path d="M10.5 1.5 L20 11 L10.5 20.5 L1 11Z" fill="none" stroke="currentColor" stroke-width="1.3"/></svg></span><span class="m" style="display:inline-block;font-size:22px;line-height:1;transform:scaleX(0.795);transform-origin:0 0;margin-right:-2.71px">(</span>基<span class="m" style="display:inline-block;font-size:22px;line-height:1;transform:scaleX(0.795);transform-origin:0 0;margin-right:-2.71px">)</span>重酒石酸间羟胺</div>
<div style="position:absolute;left:367px;top:389px;width:134px;font-size:21px;line-height:21px;color:#111;white-space:nowrap;overflow:hidden"><span class="m" style="display:inline-block;font-size:22px;line-height:1;transform:scaleX(0.795);transform-origin:0 0;margin-right:-18.94px">8422291</span></div>
<div style="position:absolute;left:507px;top:389px;width:255px;font-size:21px;line-height:21px;color:#111;white-space:nowrap;overflow:hidden"><span class="m" style="display:inline-block;font-size:22px;line-height:1;transform:scaleX(0.795);transform-origin:0 0;margin-right:-27.06px">1ml:10mg*2</span>支</div>
<div style="position:absolute;left:768px;top:389px;width:213px;font-size:21px;line-height:21px;color:#111;white-space:nowrap;overflow:hidden"><span class="m" style="display:inline-block;font-size:22px;line-height:1;transform:scaleX(0.795);transform-origin:0 0;margin-right:-54.12px">25357000000120018013</span></div>
<div style="position:absolute;left:987px;top:389px;width:188px;font-size:21px;line-height:21px;color:#111;white-space:nowrap;overflow:hidden"><span class="m" style="display:inline-block;font-size:22px;line-height:1;transform:scaleX(0.795);transform-origin:0 0;margin-right:-21.65px">25025445</span></div>
<div style="position:absolute;left:1177px;top:389px;width:101px;text-align:right;font-size:21px;line-height:21px;color:#111;white-space:nowrap;overflow:hidden"><span class="m" style="display:inline-block;font-size:22px;line-height:1;transform:scaleX(0.795);transform-origin:0 0;margin-right:-8.12px">490</span></div>
<div style="position:absolute;left:1286px;top:389px;width:74px;font-size:21px;line-height:21px;color:#111;white-space:nowrap;overflow:hidden">盒</div>
<div style="position:absolute;left:1366px;top:389px;width:109px;font-size:21px;line-height:21px;color:#111;white-space:nowrap;overflow:hidden"><span class="m" style="display:inline-block;font-size:22px;line-height:1;transform:scaleX(0.795);transform-origin:0 0;margin-right:-13.53px">0/490</span></div>
<div style="position:absolute;left:138px;top:413px;width:16px;height:29px;background:#a8c3ec;border-bottom:1px solid #c7d7f2"></div>
<div style="position:absolute;left:154px;top:413px;width:1323px;height:29px;background:#fdf7e3;border-bottom:1px solid #cacaca"></div>
<div style="position:absolute;left:363px;top:413px;width:1px;height:29px;background:#c8c8c8"></div>
<div style="position:absolute;left:503px;top:413px;width:1px;height:29px;background:#c8c8c8"></div>
<div style="position:absolute;left:764px;top:413px;width:1px;height:29px;background:#c8c8c8"></div>
<div style="position:absolute;left:983px;top:413px;width:1px;height:29px;background:#c8c8c8"></div>
<div style="position:absolute;left:1177px;top:413px;width:1px;height:29px;background:#c8c8c8"></div>
<div style="position:absolute;left:1282px;top:413px;width:1px;height:29px;background:#c8c8c8"></div>
<div style="position:absolute;left:1362px;top:413px;width:1px;height:29px;background:#c8c8c8"></div>
<div style="position:absolute;left:1477px;top:413px;width:1px;height:29px;background:#c8c8c8"></div>
<div style="position:absolute;left:158px;top:417px;width:203px;font-size:21px;line-height:21px;color:#111;white-space:nowrap;overflow:hidden"><span style="display:inline-block;width:21px;height:21px;vertical-align:top;position:relative"><svg style="position:absolute;left:0;top:-1px" width="21" height="22"><path d="M10.5 1.5 L20 11 L10.5 20.5 L1 11Z" fill="none" stroke="currentColor" stroke-width="1.3"/></svg></span><span class="m" style="display:inline-block;font-size:22px;line-height:1;transform:scaleX(0.795);transform-origin:0 0;margin-right:-2.71px">(</span>基<span class="m" style="display:inline-block;font-size:22px;line-height:1;transform:scaleX(0.795);transform-origin:0 0;margin-right:-2.71px">)</span>重酒石酸间羟胺</div>
<div style="position:absolute;left:367px;top:417px;width:134px;font-size:21px;line-height:21px;color:#111;white-space:nowrap;overflow:hidden"><span class="m" style="display:inline-block;font-size:22px;line-height:1;transform:scaleX(0.795);transform-origin:0 0;margin-right:-18.94px">8422291</span></div>
<div style="position:absolute;left:507px;top:417px;width:255px;font-size:21px;line-height:21px;color:#111;white-space:nowrap;overflow:hidden"><span class="m" style="display:inline-block;font-size:22px;line-height:1;transform:scaleX(0.795);transform-origin:0 0;margin-right:-27.06px">1ml:10mg*2</span>支</div>
<div style="position:absolute;left:768px;top:417px;width:213px;font-size:21px;line-height:21px;color:#111;white-space:nowrap;overflow:hidden"><span class="m" style="display:inline-block;font-size:22px;line-height:1;transform:scaleX(0.795);transform-origin:0 0;margin-right:-54.12px">25357000000113892382</span></div>
<div style="position:absolute;left:987px;top:417px;width:188px;font-size:21px;line-height:21px;color:#111;white-space:nowrap;overflow:hidden"><span class="m" style="display:inline-block;font-size:22px;line-height:1;transform:scaleX(0.795);transform-origin:0 0;margin-right:-21.65px">25015245</span></div>
<div style="position:absolute;left:1177px;top:417px;width:101px;text-align:right;font-size:21px;line-height:21px;color:#111;white-space:nowrap;overflow:hidden"><span class="m" style="display:inline-block;font-size:22px;line-height:1;transform:scaleX(0.795);transform-origin:0 0;margin-right:-2.71px">7</span></div>
<div style="position:absolute;left:1286px;top:417px;width:74px;font-size:21px;line-height:21px;color:#111;white-space:nowrap;overflow:hidden">盒</div>
<div style="position:absolute;left:1366px;top:417px;width:109px;font-size:21px;line-height:21px;color:#111;white-space:nowrap;overflow:hidden"><span class="m" style="display:inline-block;font-size:22px;line-height:1;transform:scaleX(0.795);transform-origin:0 0;margin-right:-8.12px">0/7</span></div>
<div style="position:absolute;left:138px;top:1056px;width:1339px;height:38px;background:#9fbdf2;border-top:1px solid #7898dc"></div>
<div style="position:absolute;left:138px;top:1057px;width:15px;height:37px;background:#aec8f0;border-right:1px solid #87a6e0"></div>
<div style="position:absolute;left:1181px;top:1060px;width:98px;height:30px;background:#b1caf0;border:1px solid #7f9fe0"></div>
<div style="position:absolute;left:1181px;top:1065px;font-size:21px;color:#111;white-space:nowrap;line-height:21px;width:94px;overflow:hidden;text-align:right;"><span class="m" style="display:inline-block;font-size:22px;line-height:1;transform:scaleX(0.795);transform-origin:0 0;margin-right:-10.82px">1491</span></div>
<div style="position:absolute;left:1366px;top:1060px;width:106px;height:30px;background:#b1caf0;border:1px solid #7f9fe0"></div>
<div style="position:absolute;left:1371px;top:1065px;font-size:21px;color:#111;white-space:nowrap;line-height:21px;"><span class="m" style="display:inline-block;font-size:22px;line-height:1;transform:scaleX(0.795);transform-origin:0 0;margin-right:-2.71px">0</span></div>
<div style="position:absolute;left:1538px;top:176px;width:493px;height:61px;border:1px solid #a8a8a8;background:#fdfde1"></div>
<div style="position:absolute;left:1540px;top:178px;width:489px;height:57px;border:1px solid #c8c8c8;border-right-color:#fff;border-bottom-color:#fff"></div>
<div style="position:absolute;left:1548px;top:212px;font-size:17px;color:#111;white-space:nowrap;line-height:17px;">删除<span class="m" style="display:inline-block;font-size:18px;line-height:1;transform:scaleX(0.8);transform-origin:0 0;margin-right:-6.48px">(D)</span></div>
<div style="position:absolute;left:1628px;top:212px;font-size:17px;color:#111;white-space:nowrap;line-height:17px;">批量删除</div>
<div style="position:absolute;left:1717px;top:212px;font-size:17px;color:#111;white-space:nowrap;line-height:17px;">同步扫码数据<span class="m" style="display:inline-block;font-size:18px;line-height:1;transform:scaleX(0.8);transform-origin:0 0;margin-right:-6.48px">(S)</span></div>
<div style="position:absolute;left:1868px;top:212px;font-size:17px;color:#111;white-space:nowrap;line-height:17px;">退出<span class="m" style="display:inline-block;font-size:18px;line-height:1;transform:scaleX(0.8);transform-origin:0 0;margin-right:-6.48px">(X)</span></div>
<svg style="position:absolute;left:1567px;top:186px" width="26" height="26" viewBox="0 0 26 26"><defs><linearGradient id="xg" x1="0" y1="0" x2="1" y2="1"><stop offset="0" stop-color="#8fb0e0"/><stop offset="1" stop-color="#2f5fa8"/></linearGradient></defs><path d="M2 3 Q6 2 9 4 L13 9 L20 2 Q23 1 25 3 L16 12 L20 22 Q18 25 16 23 L11 15 L5 21 Q2 21 3 18 L9 12 Z" fill="url(#xg)"/></svg>
<svg style="position:absolute;left:1651px;top:186px" width="26" height="26" viewBox="0 0 26 26"><path d="M4 3 H15 L20 8 V22 H4Z" fill="#dbe6f6" stroke="#7a9ad0" stroke-width="1.3"/><path d="M15 3 V8 H20" fill="#fff" stroke="#7a9ad0" stroke-width="1"/><path d="M14 14 L22 22 M22 14 L14 22" stroke="#e02020" stroke-width="2.6"/></svg>
<svg style="position:absolute;left:1772px;top:186px" width="26" height="26" viewBox="0 0 26 26"><rect x="2" y="2" width="22" height="22" rx="3" fill="#3f74d0"/><rect x="5" y="4" width="16" height="8" fill="#bcd3f5"/><rect x="4" y="13" width="18" height="9" fill="#f0b030"/></svg>
<svg style="position:absolute;left:1886px;top:185px" width="26" height="26" viewBox="0 0 26 26"><defs><linearGradient id="pg2" x1="0" y1="0" x2="0" y2="1"><stop offset="0" stop-color="#f47a2a"/><stop offset="1" stop-color="#d41a10"/></linearGradient></defs><circle cx="12.5" cy="14" r="10" fill="url(#pg2)"/><rect x="10" y="0" width="5" height="12" fill="#f07020" stroke="#fdfde1" stroke-width="1.5"/></svg>
<div style="position:absolute;left:1541px;top:237px;width:487px;height:113px;border:1px solid #a8a8a8;background:#fdfde1"></div>
<div style="position:absolute;left:1543px;top:239px;width:483px;height:109px;border:1px solid #c8c8c8;border-right-color:#fff;border-bottom-color:#fff"></div>
<div style="position:absolute;left:1554px;top:264px;font-size:21px;color:#111;white-space:nowrap;line-height:21px;">药品名称</div>
<div style="position:absolute;left:1572px;top:302px;font-size:21px;color:#111;white-space:nowrap;line-height:21px;">追溯码</div>
<div style="position:absolute;left:1649px;top:259px;width:320px;height:30px;background:#ffff00;border-top:2px solid #7c7c7c;border-left:2px solid #7c7c7c;border-right:1px solid #e8e8e8;border-bottom:1px solid #e8e8e8"></div>
<div style="position:absolute;left:1652px;top:263px;width:315px;overflow:hidden;white-space:nowrap;font-size:21px;line-height:21px;color:#111"><span style="display:inline-block;width:21px;height:21px;vertical-align:top;position:relative"><svg style="position:absolute;left:0;top:-1px" width="21" height="22"><path d="M10.5 1.5 L20 11 L10.5 20.5 L1 11Z" fill="none" stroke="currentColor" stroke-width="1.3"/></svg></span><span class="m" style="display:inline-block;font-size:22px;line-height:1;transform:scaleX(0.795);transform-origin:0 0;margin-right:-2.71px">(</span>基<span class="m" style="display:inline-block;font-size:22px;line-height:1;transform:scaleX(0.795);transform-origin:0 0;margin-right:-2.71px">)</span>重酒石酸间羟胺注射液<span class="m" style="display:inline-block;font-size:22px;line-height:1;transform:scaleX(0.795);transform-origin:0 0;margin-right:-2.71px">(</span>阿拉明<span class="m" style="display:inline-block;font-size:22px;line-height:1;transform:scaleX(0.795);transform-origin:0 0;margin-right:-2.71px">)</span></div>
<div style="position:absolute;left:1649px;top:295px;width:320px;height:31px;background:#fff;border-top:2px solid #7c7c7c;border-left:2px solid #7c7c7c;border-right:1px solid #e8e8e8;border-bottom:1px solid #e8e8e8"></div>
<div style="position:absolute;left:1541px;top:352px;width:489px;height:744px;background:#fff;border:2px solid #1f45a8"></div>
<div style="position:absolute;left:1543px;top:354px;width:470px;height:28px;background:linear-gradient(#b8d0f3,#abc6ee 70%,#a2bfec)"></div>
<div style="position:absolute;left:1561px;top:356px;width:1px;height:24px;background:#dfe9f8"></div>
<div style="position:absolute;left:1561px;top:358px;font-size:21px;color:#111;white-space:nowrap;line-height:21px;width:452px;overflow:hidden;text-align:center;">追溯码</div>
<div style="position:absolute;left:1543px;top:710px;font-size:19px;color:#555;white-space:nowrap;line-height:19px;width:486px;overflow:hidden;text-align:center;"><span class="m" style="display:inline-block;font-size:20px;line-height:1;transform:scaleX(0.85);transform-origin:0 0;margin-right:-36.00px">&lt;No&nbsp;data&nbsp;to&nbsp;display&gt;</span></div>
<div style="position:absolute;left:1543px;top:1056px;width:470px;height:38px;background:#9fbdf2;border-top:1px solid #7898dc"></div>
<div style="position:absolute;left:1543px;top:1057px;width:18px;height:37px;background:#aec8f0;border-right:1px solid #87a6e0"></div>
<div style="position:absolute;left:1562px;top:1060px;width:448px;height:31px;background:#b1caf0;border:1px solid #7f9fe0"></div>
<div style="position:absolute;left:1568px;top:1065px;font-size:21px;color:#111;white-space:nowrap;line-height:21px;">追溯码数量:<span class="m" style="display:inline-block;font-size:22px;line-height:1;transform:scaleX(0.795);transform-origin:0 0;margin-right:-5.41px">&nbsp;0</span></div>
<div style="position:absolute;left:119px;top:217px;width:1390px;height:286px;border:4px solid #ff3636;border-radius:6px"></div>
</body></html>
